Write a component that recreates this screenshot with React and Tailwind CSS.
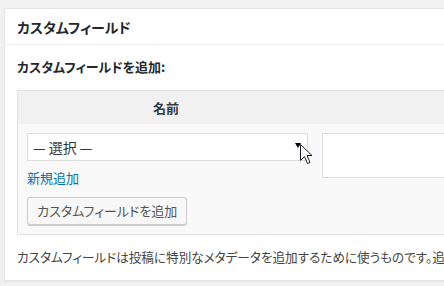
import React from "react";

const jp = "[font-family:'Noto_Sans_CJK_JP','Noto_Sans',sans-serif] [font-feature-settings:'palt']";

function Cursor() {
  return (
    <svg
      className="absolute left-[300px] top-[144px]"
      width="14"
      height="21"
      viewBox="0 0 14 21"
    >
      <path
        d="M0.5 0.5 L0.5 16.5 L4.5 12.5 L7.5 19.5 L10 18.5 L7 11.5 L12 11.5 Z"
        fill="#fff"
        stroke="#1d1d2b"
        strokeWidth="1"
        strokeLinejoin="miter"
      />
    </svg>
  );
}

export default function App() {
  return (
    <div className={`relative h-[286px] w-[444px] overflow-hidden bg-[#f1f1f1] pt-2 pl-1 ${jp}`}>
      <div className="w-[480px] border border-[#e5e5e5] bg-white shadow-[0_1px_1px_rgba(0,0,0,0.04)]">
        <div className="flex h-[36px] items-center border-b border-[#eeeeee] pl-3">
          <h2 className="text-[14px] font-bold leading-none text-[#23282d]">
            カスタムフィールド
          </h2>
        </div>
        <div className="px-3 pt-[14px] pb-[14px]">
          <p className="text-[13px] font-bold leading-[16px] text-[#23282d]">
            カスタムフィールドを追加:
          </p>
          <div className="mt-[15px] border border-[#e1e1e1]">
            <div className="flex h-[33px] items-center bg-[#f1f1f1]">
              <div className="w-[296px] shrink-0 text-center text-[13px] font-bold text-[#32373c]">
                名前
              </div>
            </div>
            <div className="flex bg-[#f9f9f9] pt-[9px] pb-[9px]">
              <div className="w-[298px] shrink-0 pl-[9px]">
                <div className="relative flex h-[28px] w-[281px] items-center border border-[#dddddd] bg-white pl-[5px] text-[14px] text-[#32373c] [font-feature-settings:normal]">
                  —&nbsp;選択&nbsp;—
                  <span className="absolute right-[6px] top-[9px] h-0 w-0 border-x-[3px] border-t-[5px] border-x-transparent border-t-black" />
                </div>
                <a className="mt-[9px] block text-[13px] leading-[16px] text-[#0073aa]">
                  新規追加
                </a>
                <button className="mt-[11px] flex h-[28px] items-center rounded-[3px] border border-[#cccccc] bg-[#f7f7f7] px-[9px] text-[13px] text-[#555555] shadow-[0_1px_0_#cccccc]">
                  カスタムフィールドを追加
                </button>
              </div>
              <div className="shrink-0 pl-[6px]">
                <div className="h-[45px] w-[200px] border border-[#dddddd] bg-white" />
              </div>
            </div>
          </div>
          <p className="mt-[13px] whitespace-nowrap text-[12.6px] leading-[18px] text-[#444444]">
            カスタムフィールドは投稿に特別なメタデータを追加するために使うものです。追加したメタデータは、テーマ内で利用できます。
          </p>
        </div>
      </div>
      <Cursor />
    </div>
  );
}
